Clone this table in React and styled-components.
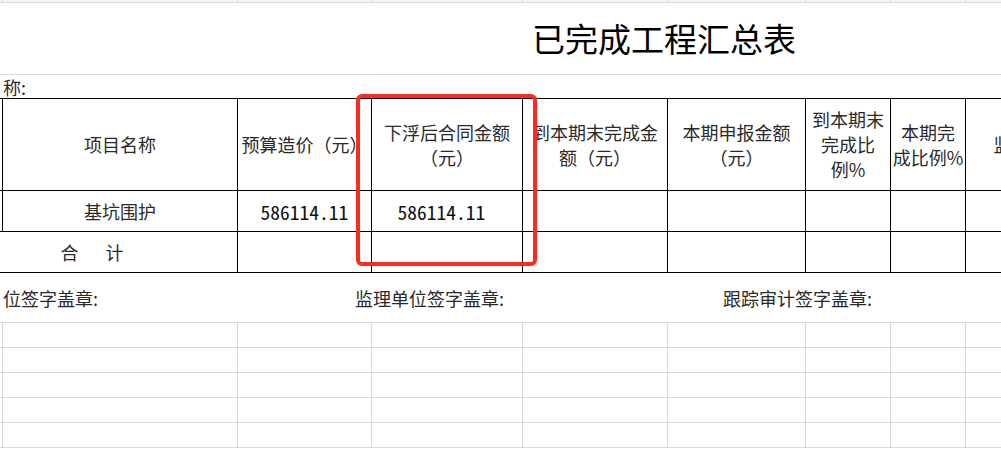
import styled, { createGlobalStyle } from 'styled-components'

const COLS = '3px 235px 134px 151px 145px 138px 85px 75px 164px'
const GRID = '#d9d9d9'
const INK = '#000000'

const GlobalStyle = createGlobalStyle`
  body {
    margin: 0;
    background: #ffffff;
    font-family: "Noto Sans CJK SC", "Noto Sans", sans-serif;
    color: #2a2a2a;
  }
`

const Sheet = styled.div`
  position: relative;
  width: 1001px;
  height: 452px;
  overflow: hidden;
  background: #ffffff;
`

const Row = styled.div`
  display: grid;
  grid-template-columns: ${COLS};
  width: 1130px;
  height: ${props => props.h}px;
  box-sizing: border-box;
  border-bottom: 1px solid ${props => (props.ink ? INK : GRID)};
`

const Cell = styled.div`
  box-sizing: border-box;
  border-right: 1px solid ${props => (props.ink ? INK : GRID)};
  display: flex;
  align-items: center;
  justify-content: center;
  text-align: center;
  font-size: 18px;
  line-height: 25px;
  white-space: nowrap;
  grid-column: ${props => (props.span ? `span ${props.span}` : 'auto')};
  padding-right: ${props => props.pr || 0}px;
`

const TopStrip = styled(Row)`
  background: #f4f4f4;
`

const TitleRow = styled.div`
  display: flex;
  align-items: center;
  height: 72px;
  box-sizing: border-box;
  padding-left: 532px;
  border-bottom: 1px solid ${GRID};
`

const Title = styled.h1`
  margin: 0;
  font-size: 33px;
  line-height: 33px;
  font-weight: 400;
  color: #000000;
  white-space: nowrap;
`

const NameRow = styled.div`
  display: flex;
  align-items: center;
  height: 23px;
  padding-left: 3px;
  font-size: 18px;
`

const Table = styled.div`
  border-top: 1px solid ${INK};
  width: 1130px;
`

const Number = styled.span`
  font-size: 19.5px;
  color: #111111;
  font-feature-settings: "hwid";
`

const Spread = styled.span`
  display: flex;
  gap: 27px;
`

const SignRow = styled.div`
  display: grid;
  grid-template-columns: 352px 368px 1fr;
  align-items: center;
  height: 50px;
  box-sizing: border-box;
  padding-left: 3px;
  border-bottom: 1px solid ${GRID};
  font-size: 18px;
  white-space: nowrap;
`

const Highlight = styled.div`
  position: absolute;
  left: 356px;
  top: 94px;
  width: 181px;
  height: 172px;
  box-sizing: border-box;
  border: 4px solid #ff2a1f;
  border-radius: 6px;
  pointer-events: none;
`

const blanks = (ink) => Array.from({ length: 9 }, (_, i) => <Cell key={i} ink={ink} />)

export default function App() {
  return (
    <Sheet>
      <GlobalStyle />
      <TopStrip h={3}>{blanks(false)}</TopStrip>
      <TitleRow>
        <Title>已完成工程汇总表</Title>
      </TitleRow>
      <NameRow>称:</NameRow>
      <Table>
        <Row h={92} ink>
          <Cell ink />
          <Cell ink>项目名称</Cell>
          <Cell ink>预算造价（元）</Cell>
          <Cell ink>下浮后合同金额<br />（元）</Cell>
          <Cell ink>到本期末完成金<br />额（元）</Cell>
          <Cell ink>本期申报金额<br />（元）</Cell>
          <Cell ink>到本期末<br />完成比<br />例%</Cell>
          <Cell ink>本期完<br />成比例%</Cell>
          <Cell ink>监理审定金额</Cell>
        </Row>
        <Row h={41} ink>
          <Cell ink />
          <Cell ink>基坑围护</Cell>
          <Cell ink><Number>586114.11</Number></Cell>
          <Cell ink pr={11}><Number>586114.11</Number></Cell>
          <Cell ink />
          <Cell ink />
          <Cell ink />
          <Cell ink />
          <Cell ink />
        </Row>
        <Row h={41} ink>
          <Cell ink span={2} pr={53}>
            <Spread><span>合</span><span>计</span></Spread>
          </Cell>
          <Cell ink />
          <Cell ink />
          <Cell ink />
          <Cell ink />
          <Cell ink />
          <Cell ink />
          <Cell ink />
        </Row>
      </Table>
      <SignRow>
        <span>位签字盖章:</span>
        <span>监理单位签字盖章:</span>
        <span>跟踪审计签字盖章:</span>
      </SignRow>
      {[0, 1, 2, 3, 4].map(i => (
        <Row key={i} h={25}>{blanks(false)}</Row>
      ))}
      <Highlight />
    </Sheet>
  )
}
